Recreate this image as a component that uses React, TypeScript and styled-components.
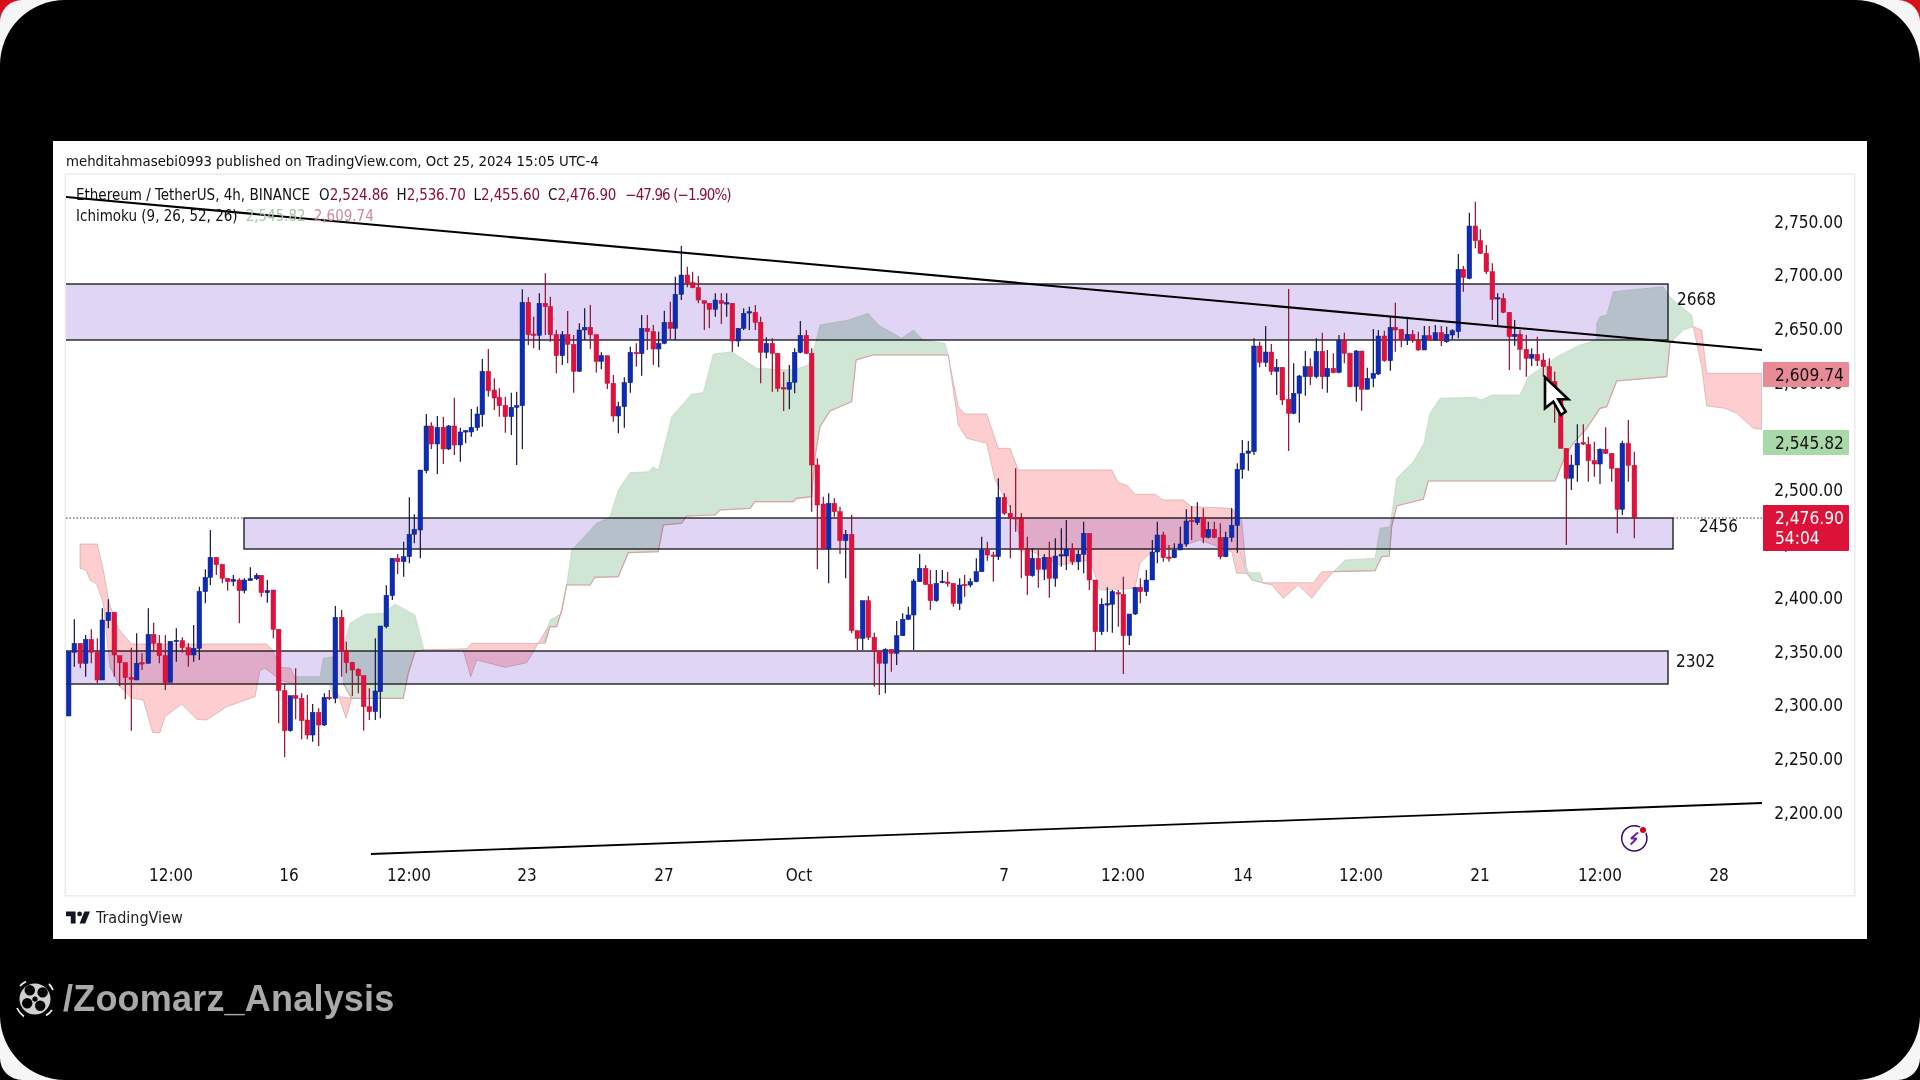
import React from "react";
import styled, { createGlobalStyle } from "styled-components";

type Pt = [number, number];
type Row = [number, number, number, number, number, "b" | "r"];

const Z4: Pt = [50, 480];
const Z5: Pt = [500, 250];
const Z6: Pt = [950, 250];
const Z9: Pt = [400, 260];
const Z2: Pt = [1400, 180];

const candleGroups: [Pt, Row[]][] = [
  [Z4, [
    [56,515,708,515,708,"b"],[73,490,517,418,560,"b"],[91,490,550,490,565,"r"],[107,478,550,465,590,"b"],[124,478,517,448,550,"r"],
    [142,517,600,475,610,"r"],[157,420,600,385,600,"b"],[175,397,422,358,445,"b"],[193,397,525,397,590,"r"],[209,527,548,527,618,"r"],
    [226,548,593,548,658,"r"],[244,592,598,503,752,"r"],[260,550,600,460,600,"b"],[276,548,550,520,570,"r"],[295,463,550,385,550,"b"],
    [311,463,490,428,510,"r"],[328,490,527,465,550,"r"],[346,527,608,465,630,"r"],[361,484,607,484,607,"b"],[379,481,483,445,545,"b"],
    [397,482,503,472,518,"r"],[415,503,525,490,560,"r"],[431,505,525,435,545,"b"],[448,334,505,320,540,"b"],[466,292,335,268,370,"b"],
    [481,232,292,150,315,"b"],[499,232,254,232,285,"r"],[517,253,295,253,310,"r"],[533,295,305,295,332,"r"],[550,298,304,285,318,"b"],
    [568,300,332,295,430,"r"],[583,300,332,295,340,"b"],[601,296,302,262,302,"b"],[620,286,296,280,300,"b"],[634,286,338,286,350,"r"],
    [652,332,338,300,368,"b"],[670,330,448,330,475,"r"],[686,448,632,448,730,"r"],[704,632,752,610,832,"r"],[721,647,752,647,755,"b"],
    [737,647,655,565,718,"r"],[755,655,722,640,778,"r"],[772,720,765,645,778,"r"],[788,697,765,672,785,"b"],[806,697,735,685,798,"r"],
    [823,652,735,640,738,"b"],[838,652,656,630,660,"r"],[856,412,655,378,670,"b"],[875,412,513,390,590,"r"],[889,513,548,485,580,"r"],
    [907,547,570,545,648,"r"],[925,568,587,565,640,"r"],[941,587,680,587,752,"r"],[958,680,695,625,720,"r"],[976,633,695,475,720,"b"],
    [991,438,635,438,715,"b"],[1009,346,440,316,445,"b"],[1027,235,347,235,360,"b"],[1043,235,245,222,282,"r"],[1061,230,245,185,290,"b"],
    [1078,163,230,52,250,"b"],[1093,148,163,103,190,"b"],
  ]],
  [Z9, [
    [61,630,810,630,895,"b"],[79,498,632,462,640,"b"],[94,498,552,487,567,"r"],[112,502,552,468,642,"b"],[130,502,567,470,612,"r"],
    [146,498,567,495,570,"b"],[163,498,555,413,585,"r"],[181,516,555,503,605,"b"],[197,512,516,510,550,"b"],[214,502,516,447,530,"b"],
    [232,462,503,440,512,"b"],[247,334,464,297,500,"b"],[265,334,392,267,410,"r"],[283,390,414,355,450,"r"],[298,412,437,385,470,"r"],
    [316,436,470,410,518,"r"],[334,442,470,398,525,"b"],
  ]],
  [Z5, [
    [50,467,472,425,645,"b"],[67,157,467,118,597,"b"],[85,157,254,142,285,"r"],[101,252,256,200,295,"r"],[118,160,256,130,300,"b"],
    [136,160,170,70,255,"r"],[151,170,254,140,275,"r"],[169,254,317,240,370,"r"],[187,254,317,243,345,"b"],[203,254,283,183,340,"r"],
    [221,283,364,255,428,"r"],[238,240,364,220,365,"b"],[254,232,240,175,270,"b"],[271,232,254,165,297,"r"],[289,254,334,254,368,"r"],
    [304,317,334,307,358,"b"],[322,317,400,317,417,"r"],[340,400,498,375,515,"r"],[355,470,498,455,550,"b"],[373,398,470,382,533,"b"],
    [391,307,398,290,428,"b"],[409,307,311,280,350,"r"],[425,235,311,195,377,"b"],[442,235,245,195,300,"r"],[460,245,297,225,345,"r"],
    [476,280,297,245,352,"b"],[493,217,280,182,283,"b"],[511,217,235,155,268,"r"],[526,133,235,80,270,"b"],[544,75,133,-12,150,"b"],
    [562,75,100,50,112,"r"],[578,98,113,65,115,"r"],[595,113,150,78,160,"r"],[613,152,160,152,240,"r"],[628,160,178,160,235,"r"],
    [646,150,178,130,200,"b"],[664,152,160,130,222,"r"],[680,158,162,130,200,"b"],[697,160,273,160,305,"r"],[715,235,273,235,290,"b"],
    [731,190,235,175,240,"b"],[748,185,189,170,240,"b"],[766,187,217,165,240,"r"],[782,217,307,200,400,"r"],[799,280,307,262,325,"b"],
    [817,280,310,265,425,"r"],[833,310,415,310,425,"r"],[851,413,417,365,483,"r"],[868,397,418,345,478,"b"],[884,307,397,295,430,"b"],
    [901,256,307,213,310,"b"],[919,256,310,240,312,"r"],[935,310,645,295,785,"r"],[952,645,765,625,958,"r"],[970,762,897,740,897,"r"],
    [986,760,897,730,1000,"b"],[1003,760,785,745,800,"r"],[1020,785,872,770,912,"r"],[1037,853,872,840,985,"b"],[1055,853,1142,795,1150,"r"],
    [1072,1142,1165,1142,1200,"r"],[1088,1052,1165,1052,1200,"b"],[1105,1052,1162,1038,1170,"r"],[1123,1162,1205,1148,1310,"r"],[1138,1205,1240,1205,1335,"r"],
    [1156,1198,1240,1195,1330,"b"],[1174,1198,1210,1198,1265,"r"],[1190,1157,1210,1113,1245,"b"],[1208,1108,1157,1090,1157,"b"],[1225,1095,1108,1070,1110,"b"],
    [1241,993,1095,987,1200,"b"],[1259,955,995,912,995,"b"],[1277,955,1003,945,1005,"r"],[1291,1003,1052,960,1080,"r"],[1309,1000,1052,960,1055,"b"],
    [1327,994,998,960,1000,"b"],[1343,996,1000,965,1010,"r"],[1360,1000,1060,1000,1070,"r"],[1379,1005,1060,985,1080,"b"],[1394,1003,1006,975,1040,"r"],
    [1411,995,1005,985,1012,"b"],[1429,965,995,925,997,"b"],[1445,900,965,860,965,"b"],[1462,900,915,875,932,"r"],[1480,915,918,905,995,"r"],
  ]],
  [Z6, [
    [145,742,920,685,930,"b"],[163,742,790,730,795,"r"],[181,790,805,765,925,"r"],[197,803,807,655,845,"r"],[214,807,900,790,985,"r"],
    [232,898,977,860,1035,"r"],[247,925,977,895,980,"b"],[265,925,958,900,1013,"r"],[283,922,958,912,990,"b"],[298,922,985,875,1043,"r"],
    [316,918,985,865,1010,"b"],[334,914,918,835,950,"b"],[349,898,918,810,960,"b"],[367,898,935,880,945,"r"],[385,913,935,900,960,"b"],
    [401,850,913,815,970,"b"],[418,850,990,850,1020,"r"],[436,990,1145,990,1205,"r"],[455,1063,1145,1045,1155,"b"],[472,1061,1065,1012,1145,"b"],
    [487,1025,1063,1020,1148,"b"],[505,1028,1032,1020,1130,"r"],[520,1033,1157,980,1272,"r"],[538,1092,1157,1092,1185,"b"],[556,1012,1092,1012,1095,"b"],
    [571,1012,1025,985,1060,"r"],[589,990,1025,960,1038,"b"],[607,906,990,870,990,"b"],[622,855,906,815,940,"b"],[640,855,923,845,935,"r"],
    [657,921,924,885,935,"r"],[673,900,923,880,925,"b"],[691,882,900,830,900,"b"],[709,813,882,778,890,"b"],[725,811,815,768,870,"r"],
    [742,803,818,757,825,"b"],[760,803,862,775,880,"r"],[775,838,862,815,865,"b"],[793,838,862,815,865,"r"],[811,862,920,820,928,"r"],
    [827,862,920,845,922,"b"],[845,826,862,775,875,"b"],[862,658,826,640,908,"b"],[877,610,658,570,686,"b"],[895,603,610,573,662,"b"],
    [912,288,605,265,615,"b"],[929,288,337,275,352,"r"],[947,306,337,228,350,"b"],[964,306,364,282,375,"r"],[980,352,364,327,435,"b"],
    [997,352,450,352,465,"r"],[1016,448,490,117,603,"r"],[1031,430,490,340,493,"b"],[1048,378,430,375,518,"b"],[1066,350,380,303,437,"b"],
    [1081,350,380,325,405,"r"],[1099,304,380,265,385,"b"],[1117,304,380,248,417,"r"],[1132,355,380,300,428,"b"],[1150,355,368,310,370,"r"],
    [1167,272,367,255,370,"b"],[1183,272,310,248,340,"r"],[1200,310,410,310,412,"r"],[1219,303,410,300,455,"b"],[1235,303,418,303,482,"r"],
    [1252,385,418,353,418,"b"],[1270,370,385,237,412,"b"],[1285,258,372,240,375,"b"],[1303,258,332,242,335,"r"],[1321,232,332,200,362,"b"],
    [1336,232,240,158,305,"r"],[1354,238,270,238,292,"r"],[1372,253,270,200,285,"b"],[1388,253,270,240,278,"r"],[1405,272,300,245,302,"r"],
    [1423,257,300,228,300,"b"],[1438,257,270,228,270,"r"],[1456,248,270,225,272,"b"],[1474,248,272,228,288,"r"],
  ]],
  [Z2, [
    [140,463,485,440,488,"b"],[157,452,465,448,478,"b"],[175,268,455,222,475,"b"],[190,268,292,258,335,"r"],[208,138,295,98,298,"b"],
    [226,138,182,65,205,"r"],[241,182,220,148,222,"r"],[259,220,275,195,282,"r"],[277,275,358,250,420,"r"],[293,353,357,340,437,"b"],
    [310,355,397,340,400,"r"],[328,397,470,397,570,"r"],[344,463,470,420,497,"b"],[360,463,508,450,570,"r"],[379,508,535,465,590,"r"],
    [395,523,535,505,558,"b"],[412,523,542,470,558,"r"],[430,540,560,520,590,"r"],[448,560,605,535,640,"r"],[464,605,640,575,728,"r"],
    [482,640,805,640,805,"r"],[499,805,895,805,1095,"r"],[514,855,895,825,930,"b"],[532,790,855,733,905,"b"],[550,788,792,733,795,"r"],
    [565,793,842,770,905,"r"],[583,842,852,785,890,"r"],[600,808,852,805,912,"b"],[617,808,820,742,822,"r"],[635,820,865,820,905,"r"],
    [652,865,988,865,1060,"r"],[667,790,988,782,1005,"b"],[685,790,856,720,905,"r"],[703,856,1012,815,1075,"r"],
  ]],
];

const candles = candleGroups.flatMap(([[ox, oy], rows]) =>
  rows.map(([x, t, b, wt, wb, c]) => ({
    x: ox + x / 3,
    top: oy + t / 3,
    bot: oy + b / 3,
    wt: oy + wt / 3,
    wb: oy + wb / 3,
    c,
  })),
);

const at = ([ox, oy]: Pt, pts: Pt[]): string =>
  pts.map(([x, y]) => `${(ox + x / 3).toFixed(1)},${(oy + y / 3).toFixed(1)}`).join(" ");

const redClouds: string[] = [
  at(Z4, [[90,192],[142,192],[160,270],[178,370],[205,445],[225,470],[245,492],[650,492],[668,510],[690,562],[722,565],[737,600],[735,614],[690,600],[665,580],[645,565],[630,570],[615,650],[530,680],[470,720],[440,718],[395,672],[345,710],[330,758],[308,758],[280,660],[245,655],[210,620],[180,560],[160,370],[140,312],[120,300],[108,270],[90,265]]),
  at(Z4, [[850,625],[870,650],[905,655],[888,715],[870,660]]),
  at(Z4, [[1100,510],[1250,506],[1265,490],[1480,490],[1500,430],[1450,515],[1430,548],[1365,562],[1280,540],[1262,590],[1240,512]]),
  at(Z6, [[-5,315],[0,345],[25,470],[45,492],[110,492],[145,595],[180,595],[205,660],[485,660],[505,698],[530,705],[555,733],[615,733],[640,750],[700,750],[725,770],[845,775],[875,810],[890,970],[905,990],[935,998],[1090,998],[1115,965],[1150,965],[1120,1000],[1085,1045],[1045,1005],[1000,1045],[965,1005],[935,998],[890,970],[860,970],[845,905],[830,900],[750,870],[720,880],[690,895],[620,890],[570,940],[555,1015],[450,1020],[420,930],[330,945],[215,890],[195,800],[135,690],[110,580],[50,565],[25,525]]),
  at(Z2, [[880,440],[905,450],[920,580],[1085,580],[1085,748],[1060,745],[1010,700],[975,685],[920,678],[905,560]]),
];

const greenClouds: string[] = [
  at(Z4, [[738,590],[810,590],[820,535],[850,530],[850,650],[838,613],[738,613]]),
  at(Z4, [[880,500],[900,430],[945,403],[1000,400],[1035,372],[1095,405],[1122,510],[1095,515],[1075,580],[1060,655],[905,655],[880,610]]),
  at(Z5, [[130,1180],[150,1110],[185,1090],[200,1005],[215,900],[290,820],[330,800],[355,720],[390,668],[445,665],[460,650],[475,660],[515,500],[575,432],[610,428],[640,312],[695,305],[770,355],[810,357],[880,360],[925,345],[945,285],[960,225],[1045,210],[1105,190],[1135,225],[1205,265],[1240,240],[1270,270],[1335,280],[1345,315],[1120,315],[1068,330],[1055,455],[990,483],[960,530],[945,620],[935,740],[890,745],[880,755],[765,755],[750,775],[660,780],[645,795],[560,798],[545,820],[490,825],[475,905],[385,908],[355,980],[285,982],[270,1005],[200,1005],[185,1080],[170,1130],[150,1130],[135,1180]]),
  at(Z6, [[870,905],[888,968],[930,968],[940,998],[905,990],[885,940]]),
  [
    at(Z6, [[1150,965],[1185,930],[1275,925],[1290,835],[1320,830],[1340,685]]),
    at(Z2, [[40,845],[72,790],[90,700],[120,655],[225,652],[245,660],[275,645],[360,645],[385,590],[430,560],[470,530],[540,495],[590,480],[590,430],[600,410],[620,405],[640,335],[740,325],[790,320],[805,345],[825,365],[875,405],[880,440],[850,450],[820,480],[810,490],[800,590],[650,603],[620,680],[600,685],[560,745],[520,790],[495,830],[465,903],[85,903],[70,958],[0,975]]),
    at(Z6, [[1340,768],[1325,830],[1318,918],[1295,920],[1275,962]]),
  ].join(" "),
];

const lowerEdges: string[] = [
  at(Z5, [[1345,315],[1120,315],[1068,330],[1055,455],[990,483],[960,530],[945,620],[935,740],[890,745],[880,755],[765,755],[750,775],[660,780],[645,795],[560,798],[545,820],[490,825],[475,905],[385,908],[355,980],[285,982],[270,1005],[200,1005],[185,1080],[170,1130],[150,1130],[135,1180]]),
  at(Z4, [[1122,510],[1095,515],[1075,580],[1060,655],[905,655],[880,610]]),
  [
    at(Z2, [[820,480],[810,490],[800,590],[650,603],[620,680],[600,685],[560,745],[520,790],[495,830],[465,903],[85,903],[70,958],[0,975]]),
    at(Z6, [[1340,768],[1325,830],[1318,918],[1295,920],[1275,962],[1150,965]]),
  ].join(" "),
];

const prices = ["2,750.00","2,700.00","2,650.00","2,600.00","2,550.00","2,500.00","2,450.00","2,400.00","2,350.00","2,300.00","2,250.00","2,200.00"];

const timeLabels: [string, number][] = [
  ["12:00",171],["16",289],["12:00",409],["23",527],["27",664],["Oct",799],["7",1004],["12:00",1123],["14",1243],["12:00",1361],["21",1480],["12:00",1600],["28",1719],
];
const TIME_CELL = 60;

const Global = createGlobalStyle`
  html, body { margin: 0; padding: 0; background: #000; overflow: hidden; }
  * { box-sizing: border-box; }
`;

const CornerBackdrop = styled.div`
  width: 1920px;
  height: 1080px;
  background: linear-gradient(to bottom, #d8101c 0 50%, #000 50% 100%);
`;
const WhiteRing = styled.div`
  width: 100%;
  height: 100%;
  background: #f6f6f6;
  border-radius: 22px;
`;
const Screen = styled.main`
  width: 100%;
  height: 100%;
  background: #000;
  border-radius: 65px;
  padding: 141px 0 0 0;
  display: flex;
  flex-direction: column;
  align-items: flex-start;
`;
const Panel = styled.section`
  width: 1814px;
  height: 798px;
  margin-left: 53px;
  background: #fff;
  padding: 0 13px;
  display: flex;
  flex-direction: column;
  font-family: "DejaVu Sans", sans-serif;
  font-stretch: condensed;
  color: #111;
`;
const PublishLine = styled.header`
  height: 34px;
  padding-top: 5px;
  display: flex;
  align-items: center;
  font-size: 14.8px;
  white-space: nowrap;
`;
const ChartFrame = styled.div`
  width: 1788px;
  height: 720px;
  box-shadow: 0 0 0 1.5px #ececec;
  display: flex;
  flex-direction: column;
`;
const ChartRow = styled.div`
  height: 680px;
  display: flex;
`;
const PlotArea = styled.div`
  position: relative;
  width: 1696px;
  height: 680px;
`;
const PlotSvg = styled.svg`
  display: block;
  width: 100%;
  height: 100%;
`;
const CloudLayer = styled.g`
  mix-blend-mode: multiply;
`;
const Legend = styled.div`
  position: absolute;
  left: 10px;
  top: 10.5px;
  display: flex;
  flex-direction: column;
  gap: 3px;
  font-size: 15px;
  line-height: 18px;
`;
const LegendRow = styled.div`
  display: flex;
  gap: 8px;
  white-space: nowrap;
`;
const SymbolName = styled.span`
  margin-right: 1px;
`;
const OhlcValue = styled.span`
  color: #8b0f33;
  letter-spacing: -0.15px;
`;
const ChangeValue = styled(OhlcValue)`
  letter-spacing: -0.9px;
  margin-left: 1px;
`;
const IndicatorValue = styled.span<{ $tone: "green" | "pink" }>`
  color: ${(p) => (p.$tone === "green" ? "#a8c8aa" : "#c98c9c")};
`;
const LevelLabel = styled.text`
  font-family: "DejaVu Sans", sans-serif;
  font-stretch: condensed;
  font-size: 17px;
  fill: #111;
`;
const PriceAxis = styled.div`
  position: relative;
  width: 92px;
  padding: 20.5px 11px 0 0;
  display: flex;
  flex-direction: column;
  align-items: flex-end;
  font-size: 17.2px;
`;
const PriceTick = styled.div`
  height: 53.75px;
  line-height: 53.75px;
`;
const PriceTag = styled.div<{ $bg: string; $color: string; $top: number; $h: number }>`
  position: absolute;
  left: 1px;
  top: ${(p) => p.$top}px;
  width: 86px;
  height: ${(p) => p.$h}px;
  background: ${(p) => p.$bg};
  color: ${(p) => p.$color};
  padding-left: 12px;
  display: flex;
  flex-direction: column;
  justify-content: center;
  line-height: 20px;
  border-radius: 1px;
`;
const TimeAxis = styled.div`
  height: 40px;
  display: flex;
  align-items: center;
  font-size: 17px;
`;
const TimeCell = styled.div`
  flex: none;
  width: ${TIME_CELL}px;
  text-align: center;
`;
const BrandBar = styled.footer`
  height: 44px;
  display: flex;
  align-items: center;
  gap: 6px;
  font-size: 16px;
  color: #222;
`;
const Watermark = styled.div`
  margin-top: 39px;
  margin-left: 14px;
  display: flex;
  align-items: center;
  gap: 7px;
  font-family: "Liberation Sans", Arial, sans-serif;
  font-weight: 700;
  font-size: 36px;
  letter-spacing: 0.2px;
  line-height: 40px;
  color: #a9a9a9;
`;

const ReelIcon = () => (
  <svg width="42" height="42" viewBox="-21 -21 42 42">
    <circle r="15.5" fill="#cfcfcf" />
    <circle cx="-5.2" cy="-8.8" r="5.2" fill="#000" />
    <circle cx="7.6" cy="-6.6" r="5.2" fill="#000" />
    <circle cx="5.2" cy="6.8" r="5.2" fill="#000" />
    <circle cx="-7.8" cy="4.2" r="5.2" fill="#000" />
    <circle r="2.6" fill="#000" />
    <g fill="none" stroke="#eee" strokeWidth="1.8">
      <path d="M-15 -13 A20 20 0 0 1 -9 -17.5" />
      <path d="M14 -15 A20 20 0 0 1 18 -9" />
      <path d="M17 11 A20 20 0 0 1 11 16.5" />
      <path d="M-11 17.5 A20 20 0 0 1 -18 9" />
    </g>
  </svg>
);

const TvLogo = () => (
  <svg width="24" height="13" viewBox="2 5.5 30 16">
    <path fill="#131722" d="M14 6H2v6h6v9h6V6zm12 15h-7l6-15h7l-6 15zm-7-9a3 3 0 1 0 0-6 3 3 0 0 0 0 6z" />
  </svg>
);

const Plot = () => (
  <PlotSvg viewBox="66 175 1696 680">
    <rect x="60" y="284" width="1608" height="56" fill="#e1d5f5" stroke="#111" strokeWidth="1.3" />
    <rect x="244" y="518" width="1429" height="31" fill="#e1d5f5" stroke="#111" strokeWidth="1.3" />
    <rect x="60" y="651" width="1608" height="33" fill="#e1d5f5" stroke="#111" strokeWidth="1.3" />
    <line x1="66" y1="518" x2="244" y2="518" stroke="#333" strokeWidth="1" strokeDasharray="1.5 2" />
    <line x1="1673" y1="518" x2="1762" y2="518" stroke="#333" strokeWidth="1" strokeDasharray="1.5 2" />
    <CloudLayer>
      {redClouds.map((p, i) => (
        <polygon key={i} points={p} fill="#fdcdd0" stroke="#c79a9a" strokeOpacity="0.55" strokeWidth="1" />
      ))}
      {greenClouds.map((p, i) => (
        <polygon key={i} points={p} fill="#cee6d3" stroke="#bcc8b8" strokeOpacity="0.5" strokeWidth="1" />
      ))}
      {lowerEdges.map((p, i) => (
        <polyline key={i} points={p} fill="none" stroke="#d9a3a3" strokeWidth="1.2" />
      ))}
    </CloudLayer>
    {candles.map((k, i) => (
      <g key={i}>
        <line x1={k.x} x2={k.x} y1={k.wt} y2={k.wb} stroke={k.c === "b" ? "#10163f" : "#8d1030"} strokeWidth="1.2" />
        <rect
          x={k.x - 2.3}
          y={k.top}
          width="4.6"
          height={Math.max(k.bot - k.top, 1.4)}
          fill={k.c === "b" ? "#0d2cb4" : "#e0113c"}
          stroke={k.c === "b" ? "#0c1f88" : "#c30f38"}
          strokeWidth="0.5"
        />
      </g>
    ))}
    <line x1="66" y1="197" x2="1762" y2="350" stroke="#000" strokeWidth="2.1" />
    <line x1="371" y1="854" x2="1762" y2="803" stroke="#000" strokeWidth="1.8" />
    <LevelLabel x="1677" y="304.5">2668</LevelLabel>
    <LevelLabel x="1699" y="532">2456</LevelLabel>
    <LevelLabel x="1676" y="666.5">2302</LevelLabel>
    <polygon
      points={at(Z2, [[435,592],[435,685],[460,665],[482,705],[497,695],[475,658],[505,658]])}
      fill="#fff"
      stroke="#000"
      strokeWidth="2.6"
      strokeLinejoin="miter"
    />
    <circle cx="1634.3" cy="838.3" r="12.6" fill="none" stroke="#3a0a66" strokeWidth="1.5" />
    <path d="M1638 832.5 L1631 838.6 L1636.6 838.6 L1630.6 844.5" fill="none" stroke="#6a1fb0" strokeWidth="2" strokeLinejoin="bevel" />
    <circle cx="1643" cy="830" r="4" fill="#fff" />
    <circle cx="1643" cy="830" r="3" fill="#d0021b" />
  </PlotSvg>
);

const timeOffsets = timeLabels.map(([, c], i) =>
  i === 0 ? c - TIME_CELL / 2 - 66 : c - timeLabels[i - 1][1] - TIME_CELL,
);

export default function App() {
  return (
    <>
      <Global />
      <CornerBackdrop>
        <WhiteRing>
          <Screen>
            <Panel>
              <PublishLine>mehditahmasebi0993 published on TradingView.com, Oct 25, 2024 15:05 UTC-4</PublishLine>
              <ChartFrame>
                <ChartRow>
                  <PlotArea>
                    <Plot />
                    <Legend>
                      <LegendRow>
                        <SymbolName>Ethereum / TetherUS, 4h, BINANCE</SymbolName>
                        <span>O<OhlcValue>2,524.86</OhlcValue></span>
                        <span>H<OhlcValue>2,536.70</OhlcValue></span>
                        <span>L<OhlcValue>2,455.60</OhlcValue></span>
                        <span>C<OhlcValue>2,476.90</OhlcValue></span>
                        <ChangeValue>−47.96 (−1.90%)</ChangeValue>
                      </LegendRow>
                      <LegendRow>
                        <span>Ichimoku (9, 26, 52, 26)</span>
                        <IndicatorValue $tone="green">2,545.82</IndicatorValue>
                        <IndicatorValue $tone="pink">2,609.74</IndicatorValue>
                      </LegendRow>
                    </Legend>
                  </PlotArea>
                  <PriceAxis>
                    {prices.map((p) => (
                      <PriceTick key={p}>{p}</PriceTick>
                    ))}
                    <PriceTag $bg="#e98a97" $color="#111" $top={187} $h={25}>2,609.74</PriceTag>
                    <PriceTag $bg="#a9d9a8" $color="#111" $top={255} $h={25}>2,545.82</PriceTag>
                    <PriceTag $bg="#dc1238" $color="#fff" $top={330} $h={46}>
                      <span>2,476.90</span>
                      <span>54:04</span>
                    </PriceTag>
                  </PriceAxis>
                </ChartRow>
                <TimeAxis>
                  {timeLabels.map(([t], i) => (
                    <TimeCell key={i} style={{ marginLeft: timeOffsets[i] }}>{t}</TimeCell>
                  ))}
                </TimeAxis>
              </ChartFrame>
              <BrandBar>
                <TvLogo />
                TradingView
              </BrandBar>
            </Panel>
            <Watermark>
              <ReelIcon />
              /Zoomarz_Analysis
            </Watermark>
          </Screen>
        </WhiteRing>
      </CornerBackdrop>
    </>
  );
}
